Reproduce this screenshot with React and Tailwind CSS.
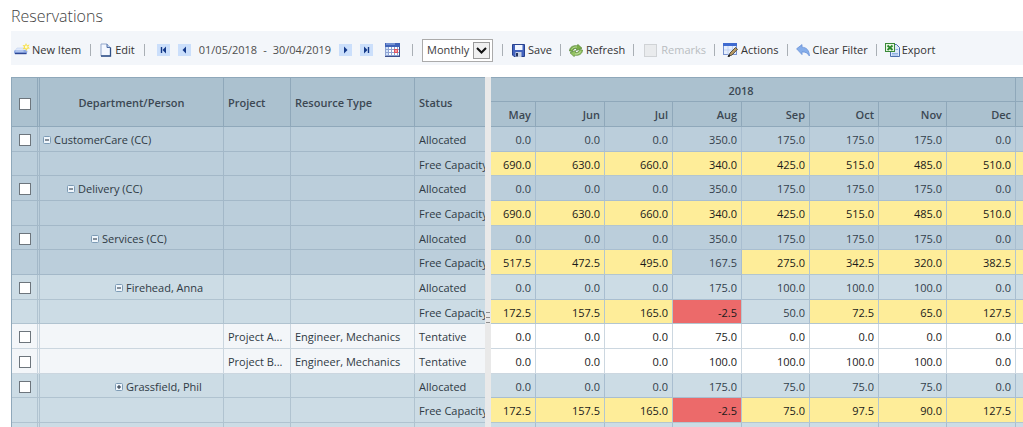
import { useState } from "react";
import clsx from "clsx";

const MONTHS = ["May", "Jun", "Jul", "Aug", "Sep", "Oct", "Nov", "Dec"];

const MONTH_WIDTHS = [
  "w-[45px]",
  "w-[69px]",
  "w-[68px]",
  "w-[69px]",
  "w-[68px]",
  "w-[69px]",
  "w-[68px]",
  "w-[69px]",
];

const INDENTS = ["pl-[3px]", "pl-[27px]", "pl-[51px]", "pl-[75px]"];

// y = over free capacity, r = overbooked, "-" = plain cell
const ROWS = [
  { id: "cc", name: "CustomerCare (CC)", level: 0, open: true, tone: "dark", status: "Allocated", values: ["0.0", "0.0", "0.0", "350.0", "175.0", "175.0", "175.0", "0.0"], marks: "---------" },
  { id: "cc-free", tone: "dark", status: "Free Capacity", values: ["690.0", "630.0", "660.0", "340.0", "425.0", "515.0", "485.0", "510.0"], marks: "yyyyyyyyy" },
  { id: "delivery", name: "Delivery (CC)", level: 1, open: true, tone: "dark", status: "Allocated", values: ["0.0", "0.0", "0.0", "350.0", "175.0", "175.0", "175.0", "0.0"], marks: "---------" },
  { id: "delivery-free", tone: "dark", status: "Free Capacity", values: ["690.0", "630.0", "660.0", "340.0", "425.0", "515.0", "485.0", "510.0"], marks: "yyyyyyyyy" },
  { id: "services", name: "Services (CC)", level: 2, open: true, tone: "dark", status: "Allocated", values: ["0.0", "0.0", "0.0", "350.0", "175.0", "175.0", "175.0", "0.0"], marks: "---------" },
  { id: "services-free", tone: "dark", status: "Free Capacity", values: ["517.5", "472.5", "495.0", "167.5", "275.0", "342.5", "320.0", "382.5"], marks: "yyy-yyyyy" },
  { id: "anna", name: "Firehead, Anna", level: 3, open: true, tone: "light", status: "Allocated", values: ["0.0", "0.0", "0.0", "175.0", "100.0", "100.0", "100.0", "0.0"], marks: "---------" },
  { id: "anna-free", tone: "light", status: "Free Capacity", values: ["172.5", "157.5", "165.0", "-2.5", "50.0", "72.5", "65.0", "127.5"], marks: "yyyr-yyyy" },
  { id: "project-a", tone: "leaf", project: "Project A...", resource: "Engineer, Mechanics", status: "Tentative", values: ["0.0", "0.0", "0.0", "75.0", "0.0", "0.0", "0.0", "0.0"], marks: "---------" },
  { id: "project-b", tone: "leaf", project: "Project B...", resource: "Engineer, Mechanics", status: "Tentative", values: ["0.0", "0.0", "0.0", "100.0", "100.0", "100.0", "100.0", "0.0"], marks: "---------" },
  { id: "phil", name: "Grassfield, Phil", level: 3, open: false, tone: "light", status: "Allocated", values: ["0.0", "0.0", "0.0", "175.0", "75.0", "75.0", "75.0", "0.0"], marks: "---------" },
  { id: "phil-free", tone: "light", status: "Free Capacity", values: ["172.5", "157.5", "165.0", "-2.5", "75.0", "97.5", "90.0", "127.5"], marks: "yyyryyyyy" },
];

const LEFT_TONES = {
  dark: "bg-[#bbcedb] border-[#a3b8c8]",
  light: "bg-[#ccdce5] border-[#b0c3d0]",
  leaf: "bg-[#f3f6f9] border-[#cbd6df]",
};

const RIGHT_TONES = {
  dark: "bg-[#bbcedb] text-[#33404b]",
  light: "bg-[#ccdce5] text-[#33404b]",
  leaf: "bg-white text-[#1a1a1a]",
};

const rowHeight = (i) => (i % 3 === 1 ? "h-6" : "h-[25px]");

function NewItemIcon() {
  return (
    <svg width="16" height="14" viewBox="0 0 16 14">
      <path d="M3 5h8l3 4H0z" fill="#dfe9fb" stroke="#c4d4ee" strokeWidth=".6" />
      <rect x="0" y="7" width="13" height="4" rx="1.5" fill="#8fabe4" />
      <path d="M1 10.5h11.5" stroke="#2d4794" strokeWidth="1.4" />
      <path d="M1.5 8h8" stroke="#d4e1fa" />
      <path d="M12 0l1 2.2 2.6-.6-1.4 2.1L16 5.500l-2.500.3L12.500 8l-1.300-2.100-2.600.3 1.500-2.100L8.500 2l2.500.3z" fill="#f7e04d" />
      <circle cx="12.2" cy="4" r="1.4" fill="#fffbd0" />
    </svg>
  );
}

function PageIcon() {
  return (
    <svg width="12" height="14" viewBox="0 0 12 14">
      <path d="M1 1h6l3.500 3.500v8.500H1z" fill="#f4f8ff" stroke="#93a8cd" />
      <path d="M10.500 4.500V13H1" fill="none" stroke="#2f4f86" strokeWidth="1.3" />
      <path d="M7 1v3.500h3.500" fill="#bdd0ee" stroke="#4f6ca3" />
    </svg>
  );
}

function CalendarIcon() {
  return (
    <svg width="15" height="14" viewBox="0 0 15 14">
      <rect width="15" height="14" fill="#8fa3d2" />
      <rect width="15" height="4" fill="#3f63b8" />
      <path d="M1 1h9" stroke="#a9c0ec" />
      {[4, 7, 10].map((y) =>
        [1, 4, 7, 10, 13].map((x) => (
          <rect key={`${x}-${y}`} x={x} y={y} width={x === 13 ? 1 : 2} height="2" fill={x === 1 ? "#cfe2fb" : "#ffffff"} />
        ))
      )}
      <rect x="9" y="6" width="4" height="4" fill="#e2525b" />
      <rect x="10" y="7" width="2" height="2" fill="#f09a9f" />
      <path d="M0 13.5h15M14.5 4v10" stroke="#3d4f8a" />
    </svg>
  );
}

function SaveIcon() {
  return (
    <svg width="13" height="13" viewBox="0 0 13 13">
      <path d="M.5.5h12v12H2L.5 11z" fill="#4363bd" stroke="#27418f" />
      <rect x="3" y="1" width="7.5" height="5" fill="#f1f6ff" />
      <rect x="3.5" y="8" width="6" height="5" fill="#c9d2e4" />
      <rect x="4" y="9" width="2" height="3.5" fill="#24345f" />
    </svg>
  );
}

function RefreshIcon() {
  return (
    <svg width="14" height="13" viewBox="0 0 14 13">
      <path d="M.5 7C.5 3.500 3.500 1.300 7.500 1.700L9 .5l4 3.700L7.500 6.500V4.400C5.500 4.200 4 5.200 3.500 7.500z" fill="#79ad49" stroke="#4a7a28" strokeWidth=".6" />
      <path d="M13.500 6c0 3.500-3 5.700-7 5.300L5 12.500 1 8.800l5.500-2.300v2.100c2 .2 3.500-.8 4-3.100z" fill="#94c363" stroke="#4a7a28" strokeWidth=".6" />
      <path d="M2.500 5.500C3.500 3.500 5.500 2.800 8 3M11.500 7.500c-1 2-3 2.700-5.500 2.500" fill="none" stroke="#cfe6b4" strokeWidth=".8" />
    </svg>
  );
}

function ActionsIcon() {
  return (
    <svg width="15" height="14" viewBox="0 0 15 14">
      <rect x=".5" y=".5" width="13" height="11" fill="#e6effd" stroke="#7792cf" />
      <rect x="0" y="0" width="14" height="3" fill="#3f6bd0" />
      <path d="M5 3v8.500M9.500 3v8.500M1 7h12" stroke="#c3d3f2" />
      <path d="M6 13l1-3 5.500-5.500 2 1.800L9 12z" fill="#b99a63" stroke="#4c4638" strokeWidth=".9" />
      <path d="M5 13.500l2-.5-1-1z" fill="#222" stroke="#222" />
    </svg>
  );
}

function UndoIcon() {
  return (
    <svg width="14" height="13" viewBox="0 0 14 13">
      <path d="M.6 4.800L6 .6v2.600c4.500.2 7.300 3 7.400 8.800-1.700-3-3.900-4.200-7.400-4.100v2.700z" fill="#86aeea" stroke="#6b93d8" strokeWidth=".8" />
    </svg>
  );
}

function ExcelIcon() {
  return (
    <svg width="15" height="14" viewBox="0 0 15 14">
      <path d="M5.500 1.500h6l3 3v9h-9z" fill="#dce8fa" stroke="#4d70b0" />
      <path d="M7 10.500h6M7 12h6M10.500 6.500H13" stroke="#8fb0e2" />
      <rect x=".5" y=".5" width="9" height="8" fill="#e9f6e4" stroke="#3a8a38" />
      <path d="M2.500 2.500l5 4.500M7.500 2.500l-5 4.500" stroke="#2b8a2b" strokeWidth="1.8" />
    </svg>
  );
}

function Separator() {
  return <span className="h-3 w-px shrink-0 bg-[#a9afb5]" />;
}

function ToolButton({ icon, label, gap = "gap-[3px]" }) {
  return (
    <button type="button" className={clsx("flex shrink-0 items-center whitespace-nowrap", gap)}>
      {icon}
      {label}
    </button>
  );
}

function NavButton({ label, dir, edge }) {
  return (
    <button type="button" aria-label={label} className="shrink-0">
      <svg width="13" height="12" viewBox="0 0 13 12" className={dir === "next" ? "" : "-scale-x-100"}>
        <rect width="13" height="12" fill="#cbdffb" />
        <path d={edge ? "M4 2.500v7L7.500 6z" : "M5 2.500v7L8.500 6z"} fill="#153a8a" />
        {edge && <path d="M8.500 3v6" stroke="#153a8a" strokeWidth="1.4" />}
      </svg>
    </button>
  );
}

function Checkbox({ label }) {
  return (
    <input
      type="checkbox"
      aria-label={label}
      className="block size-3 appearance-none border border-[#6d757c] bg-white checked:bg-[#2d4794]"
    />
  );
}

function TreeToggle({ open, name }) {
  return (
    <button type="button" aria-label={`${open ? "Collapse" : "Expand"} ${name}`} className="shrink-0">
      <svg width="8" height="8" viewBox="0 0 8 8">
        <rect x=".5" y=".5" width="7" height="7" rx="1" fill="#eef5fb" stroke="#7d9bb5" />
        <path d={open ? "M2 4h4" : "M2 4h4M4 2v4"} stroke="#1d2b3a" />
      </svg>
    </button>
  );
}

function Toolbar() {
  const [period, setPeriod] = useState("Monthly");

  return (
    <div className="flex h-[34px] items-center gap-[9px] bg-[#f3f6fa] pt-1 pl-[3px] text-[#333333]">
      <ToolButton icon={<NewItemIcon />} label="New Item" gap="gap-0.5" />
      <Separator />
      <ToolButton icon={<PageIcon />} label="Edit" />
      <Separator />
      <div className="ml-[3px] flex shrink-0 items-center gap-2">
        <NavButton label="First period" dir="prev" edge />
        <NavButton label="Previous period" dir="prev" />
        <div className="flex gap-1.5 whitespace-nowrap text-[#4d4d4d]">
          <span>01/05/2018</span>
          <span>-</span>
          <span>30/04/2019</span>
        </div>
        <NavButton label="Next period" dir="next" />
        <NavButton label="Last period" dir="next" edge />
      </div>
      <button type="button" aria-label="Choose dates" className="mx-[3px] shrink-0">
        <CalendarIcon />
      </button>
      <Separator />
      <div className="relative shrink-0">
        <select
          aria-label="Period"
          value={period}
          onChange={(e) => setPeriod(e.target.value)}
          className="block h-[23px] w-[71px] appearance-none border border-[#ababab] bg-white pl-1 text-[#3b3b3b]"
        >
          <option>Monthly</option>
          <option>Weekly</option>
          <option>Daily</option>
        </select>
        <span className="pointer-events-none absolute top-[3px] right-[3px] flex h-[17px] w-[17px] items-center justify-center border border-[#9a9a9a] bg-[#f0f0f0]">
          <svg width="11" height="7" viewBox="0 0 11 7">
            <path d="M1 1l4.500 4.500L10 1" fill="none" stroke="#111" strokeWidth="2" />
          </svg>
        </span>
      </div>
      <Separator />
      <div className="flex items-center gap-2">
        <ToolButton icon={<SaveIcon />} label="Save" />
        <Separator />
        <ToolButton icon={<RefreshIcon />} label="Refresh" />
        <Separator />
        <label className="ml-0.5 flex shrink-0 items-center gap-1 text-[#b9bdc1]">
          <input type="checkbox" disabled className="size-[13px] appearance-none border border-[#d0d3d6] bg-[#e9ebed]" />
          Remarks
        </label>
        <Separator />
        <ToolButton icon={<ActionsIcon />} label="Actions" />
        <Separator />
        <ToolButton icon={<UndoIcon />} label="Clear Filter" />
        <Separator />
        <ToolButton icon={<ExcelIcon />} label="Export" gap="gap-0.5" />
      </div>
    </div>
  );
}

function ResourceTable() {
  const head = "border-r border-b border-[#8fa8ba] px-1 pt-0.5 font-semibold";

  return (
    <table className="w-[474px] shrink-0 table-fixed border-separate border-spacing-0 border-t border-l border-[#8fa8ba] whitespace-nowrap text-[#2f3a44]">
      <thead>
        <tr className="h-[49px] bg-[#abc1cf] text-left text-[#3c4853]">
          <th className="w-7 border-r-3 border-b border-[#8fa8ba] [border-right-style:double] p-0 pt-1 pl-[7px]">
            <Checkbox label="Select all" />
          </th>
          <th className={clsx(head, "w-[184px] text-center")}>Department/Person</th>
          <th className={clsx(head, "w-[67px] text-left")}>Project</th>
          <th className={clsx(head, "w-[124px] text-left")}>Resource Type</th>
          <th className={clsx(head, "border-r-0 text-left")}>Status</th>
        </tr>
      </thead>
      <tbody>
        {ROWS.map((row, i) => {
          const tone = LEFT_TONES[row.tone];
          const cell = clsx("overflow-hidden border-r border-b p-0 pt-0.5 pl-1", tone);
          return (
            <tr key={row.id} className={rowHeight(i)}>
              <td className={clsx("border-r-3 border-b p-0 pt-0.5 pl-[7px] [border-right-style:double]", tone)}>
                {(row.name || row.project) && <Checkbox label={`Select ${row.name || row.project}`} />}
              </td>
              <td className={clsx("border-r border-b p-0 pt-0.5", tone, INDENTS[row.level || 0])}>
                {row.name && (
                  <div className="flex items-center gap-[3px]">
                    <TreeToggle open={row.open} name={row.name} />
                    {row.name}
                  </div>
                )}
              </td>
              <td className={cell}>{row.project}</td>
              <td className={cell}>{row.resource}</td>
              <td className={clsx(cell, "border-r-0")}>{row.status}</td>
            </tr>
          );
        })}
        <tr className="h-1">
          <td className={clsx("border-r-3 p-0 [border-right-style:double]", LEFT_TONES.light)} />
          <td className={clsx("border-r p-0", LEFT_TONES.light)} />
          <td className={clsx("border-r p-0", LEFT_TONES.light)} />
          <td className={clsx("border-r p-0", LEFT_TONES.light)} />
          <td className={clsx("p-0", LEFT_TONES.light)} />
        </tr>
      </tbody>
    </table>
  );
}

function markClass(mark, tone) {
  if (mark === "y") return "bg-[#feed99] text-[#1a1a1a] border-[#b3c6cf]";
  if (mark === "r") return "bg-[#ec6a6a] text-[#1a1a1a] border-[#b3c6cf]";
  return clsx(RIGHT_TONES[tone], tone === "leaf" ? "border-[#ccd7e0]" : "border-[#a9bed0]");
}

function MonthTable() {
  return (
    <table className="w-full table-fixed border-separate border-spacing-0 border-t border-[#8fa8ba] whitespace-nowrap">
      <colgroup>
        {MONTHS.map((m, i) => (
          <col key={m} className={MONTH_WIDTHS[i]} />
        ))}
        <col />
      </colgroup>
      <thead className="bg-[#abc1cf] text-[#3c4853]">
        <tr className="h-6">
          <th colSpan={8} className="border-r border-b border-[#8fa8ba] p-0 pt-0.5 pr-6 font-semibold">2018</th>
          <th className="border-b border-[#8fa8ba] p-0" />
        </tr>
        <tr className="h-[25px]">
          {MONTHS.map((m) => (
            <th key={m} className="border-r border-b border-[#8fa8ba] p-0 pt-0.5 pr-1 text-right font-semibold">{m}</th>
          ))}
          <th className="border-b border-[#8fa8ba] p-0" />
        </tr>
      </thead>
      <tbody>
        {ROWS.map((row, i) => (
          <tr key={row.id} className={rowHeight(i)}>
            {row.values.map((value, col) => (
              <td key={MONTHS[col]} className={clsx("border-r border-b p-0 pt-0.5 pr-1 text-right", markClass(row.marks[col], row.tone))}>
                {value}
              </td>
            ))}
            <td className={clsx("border-b p-0", markClass(row.marks[8], row.tone))} />
          </tr>
        ))}
        <tr className="h-1">
          {MONTHS.map((m) => (
            <td key={m} className={clsx("border-r p-0", markClass("-", "light"))} />
          ))}
          <td className={clsx("p-0", markClass("-", "light"))} />
        </tr>
      </tbody>
    </table>
  );
}

export default function App() {
  return (
    <main className="overflow-hidden bg-white pl-[11px] font-['Open_Sans','Noto_Sans',sans-serif] text-[11px] leading-4">
      <h1 className="pt-1 pb-[3px] text-base leading-6 font-light text-[#3f3f3f]">Reservations</h1>
      <Toolbar />
      <div className="mt-3 flex">
        <ResourceTable />
        <div className="flex w-1.5 shrink-0 flex-col items-center justify-center gap-1 bg-[#e9e9e9] pt-[130px]">
          <span className="h-px w-1 bg-[#8d8d8d]" />
          <span className="h-px w-1 bg-[#8d8d8d]" />
          <span className="h-px w-1 bg-[#8d8d8d]" />
        </div>
        <div className="min-w-0 flex-1 overflow-hidden">
          <MonthTable />
        </div>
      </div>
    </main>
  );
}
